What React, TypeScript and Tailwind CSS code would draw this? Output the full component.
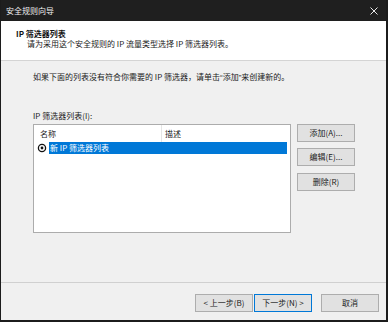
import React from "react";

const font = { fontFamily: '"Noto Sans CJK SC", "Noto Sans", sans-serif' };
const latin = { fontFamily: '"Liberation Sans", "Noto Sans", sans-serif' };

function Btn({ children, primary }: { children: React.ReactNode; primary?: boolean }) {
  return (
    <div
      className={`w-[58px] h-[18px] flex items-center justify-center text-[8px] leading-none text-[#1a1a1a] bg-[#e1e1e1] border ${
        primary ? "border-[#0078d7]" : "border-[#adadad]"
      }`}
    >
      {children}
    </div>
  );
}

export default function App() {
  return (
    <div
      className="w-[388px] h-[322px] flex flex-col bg-[#f0f0f0] border-l border-r-2 border-b-2 border-[#1c1c1c] overflow-hidden"
      style={font}
    >
      {/* title bar */}
      <div className="h-[21px] shrink-0 bg-[#1f1f1f] flex items-center justify-between pl-[5px] pr-[8px]">
        <span className="text-[8px] leading-none text-[#f0f0f0]">安全规则向导</span>
        <svg width="8" height="8" viewBox="0 0 8 8" className="mt-[1px]">
          <path d="M0.5 0.5 L7.5 7.5 M7.5 0.5 L0.5 7.5" stroke="#e8e8e8" strokeWidth="1" />
        </svg>
      </div>

      {/* header */}
      <div className="h-[40px] shrink-0 bg-white border-b border-[#d4d4d4] pt-[8px] pl-[15px]">
        <div className="text-[8px] leading-[10px] font-bold text-[#111]">IP 筛选器列表</div>
        <div className="text-[8px] leading-[10px] text-[#1a1a1a] pl-[11px]">
          请为采用这个安全规则的 IP 流量类型选择 IP 筛选器列表。
        </div>
      </div>

      {/* body */}
      <div className="flex-1 flex flex-col pl-[32px] pt-[11px]">
        <div className="text-[8px] leading-[10px] text-[#1a1a1a]">
          如果下面的列表没有符合你需要的 IP 筛选器，请单击<span style={latin}>“</span>添加<span style={latin}>”</span>来创建新的。
        </div>
        <div className="mt-[28px] text-[8px] leading-[10px] text-[#1a1a1a]">IP 筛选器列表(I):</div>
        <div className="mt-[3px] flex gap-[6px]">
          <div className="w-[258px] h-[109px] bg-white border border-[#acacac] flex flex-col">
            <div className="h-[17px] flex items-center text-[8px] leading-none text-[#1a1a1a]">
              <div className="w-[128px] h-full flex items-center pl-[6px] border-r border-[#e5e5e5]">名称</div>
              <div className="pl-[3px]">描述</div>
            </div>
            <div className="flex items-center h-[12px] mt-[0px]">
              <svg width="10" height="10" viewBox="0 0 10 10" className="ml-[3px] mr-[2px]">
                <circle cx="5" cy="5" r="3.6" fill="none" stroke="#111" strokeWidth="1.3" />
                <circle cx="5" cy="5" r="1.4" fill="#111" />
              </svg>
              <div className="w-[238px] h-full bg-[#0078d7] text-white text-[8px] leading-[12px] pl-[1px]">
                新 IP 筛选器列表
              </div>
            </div>
          </div>
          <div className="flex flex-col gap-[6px]">
            <Btn>添加(A)...</Btn>
            <Btn>编辑(E)...</Btn>
            <div className="mt-[1px]">
              <Btn>删除(R)</Btn>
            </div>
          </div>
        </div>
      </div>

      {/* footer */}
      <div className="h-[38px] shrink-0 border-t border-[#d0d0d0] flex items-start justify-end pt-[11px] pr-[7px]">
        <Btn>&lt; 上一步(B)</Btn>
        <div className="ml-[1px]">
          <Btn primary>下一步(N) &gt;</Btn>
        </div>
        <div className="ml-[9px]">
          <Btn>取消</Btn>
        </div>
      </div>
    </div>
  );
}
